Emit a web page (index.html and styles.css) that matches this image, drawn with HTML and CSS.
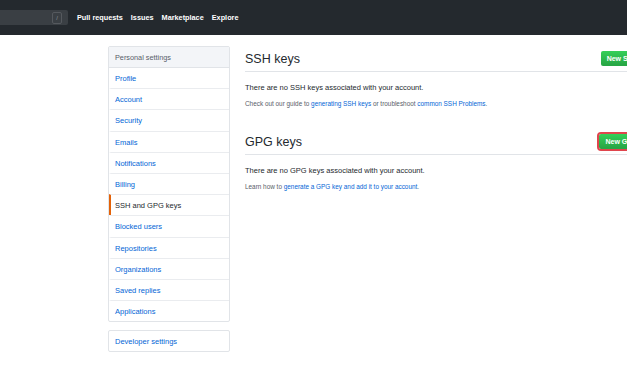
FILE: index.html
```html
<!DOCTYPE html>
<html lang="en">
<head>
  <meta charset="UTF-8">
  <meta name="viewport" content="width=device-width, initial-scale=1.0">
  <title>SSH and GPG keys</title>
  <link rel="stylesheet" href="styles.css">
</head>
<body>
  <header class="header">
    <div class="search">
      <span class="search-key">/</span>
    </div>
    <nav class="nav">
      <a href="#">Pull requests</a>
      <a href="#">Issues</a>
      <a href="#">Marketplace</a>
      <a href="#">Explore</a>
    </nav>
  </header>

  <div class="container">
    <div class="sidebar">
      <div class="menu">
        <div class="menu-heading">Personal settings</div>
        <a class="menu-item" href="#">Profile</a>
        <a class="menu-item" href="#">Account</a>
        <a class="menu-item" href="#">Security</a>
        <a class="menu-item" href="#">Emails</a>
        <a class="menu-item" href="#">Notifications</a>
        <a class="menu-item" href="#">Billing</a>
        <a class="menu-item selected" href="#">SSH and GPG keys</a>
        <a class="menu-item" href="#">Blocked users</a>
        <a class="menu-item" href="#">Repositories</a>
        <a class="menu-item" href="#">Organizations</a>
        <a class="menu-item" href="#">Saved replies</a>
        <a class="menu-item" href="#">Applications</a>
      </div>
      <div class="menu">
        <a class="menu-item first" href="#">Developer settings</a>
      </div>
    </div>

    <div class="content">
      <div class="subhead">
        <h2>SSH keys</h2>
        <a class="btn" href="#">New SSH key</a>
      </div>
      <p class="blank">There are no SSH keys associated with your account.</p>
      <p class="note">Check out our guide to <a href="#">generating SSH keys</a> or troubleshoot <a href="#">common SSH Problems</a>.</p>

      <div class="subhead second">
        <h2>GPG keys</h2>
        <a class="btn highlight" href="#">New GPG key</a>
      </div>
      <p class="blank">There are no GPG keys associated with your account.</p>
      <p class="note">Learn how to <a href="#">generate a GPG key and add it to your account</a>.</p>
    </div>
  </div>
</body>
</html>
```

FILE: styles.css
```css
html, body {
  overflow: hidden;
}
body {
  margin: 0;
  font-family: 'Liberation Sans', Arial, sans-serif;
  color: #24292e;
  background-color: #fff;
}
a {
  text-decoration: none;
  color: #0366d6;
}
.header {
  display: flex;
  align-items: center;
  height: 35px;
  background-color: #24292e;
}
.search {
  display: flex;
  align-items: center;
  justify-content: flex-end;
  width: 68px;
  height: 15px;
  background-color: #3a3f44;
  border-radius: 0 2px 2px 0;
  margin-right: 9px;
}
.search-key {
  width: 8px;
  height: 10px;
  margin-right: 6px;
  border: 1px solid #55595e;
  border-radius: 2px;
  color: #8c9196;
  font-size: 6px;
  line-height: 10px;
  text-align: center;
}
.nav {
  display: flex;
  gap: 8px;
}
.nav a {
  color: #fff;
  font-weight: bold;
  font-size: 7.3px;
}
.container {
  display: flex;
  gap: 15px;
  margin-left: 108px;
  padding-top: 11px;
}
.sidebar {
  width: 122px;
  flex-shrink: 0;
}
.menu {
  border: 1px solid #e1e4e8;
  border-radius: 2px;
  margin-bottom: 8px;
}
.menu-heading {
  height: 20px;
  line-height: 21px;
  padding-left: 6px;
  font-size: 7.3px;
  color: #586069;
  background-color: #f3f5f8;
  border-bottom: 1px solid #e1e4e8;
}
.menu-item {
  display: block;
  height: 20.2px;
  line-height: 22px;
  padding-left: 4px;
  border-left: 2px solid transparent;
  border-top: 1px solid #eaecef;
  font-size: 7.5px;
  overflow: hidden;
}
.menu-item.first {
  border-top: none;
}
.menu-heading + .menu-item {
  border-top: none;
}
.menu-item.selected {
  color: #24292e;
  border-left-color: #e36209;
}
.content {
  width: 412px;
  flex-shrink: 0;
}
.subhead {
  display: flex;
  align-items: center;
  justify-content: space-between;
  height: 25px;
  border-bottom: 1px solid #e1e4e8;
}
.subhead.second {
  margin-top: 20px;
}
.subhead h2 {
  margin: 0;
  font-size: 12.5px;
  font-weight: normal;
}
.btn {
  display: block;
  padding: 0 6px;
  height: 15px;
  line-height: 15px;
  font-size: 7px;
  font-weight: bold;
  color: #fff;
  background-image: linear-gradient(-180deg, #34d058 0%, #28a745 90%);
  border: 0;
  border-radius: 2px;
}
.btn.highlight {
  outline: 2px solid #e0454d;
  outline-offset: 0;
}
.blank {
  margin: 10px 0 0;
  font-size: 7.5px;
  line-height: 11px;
}
.note {
  margin: 5px 0 0;
  font-size: 6.4px;
  line-height: 11px;
  color: #586069;
}
```
